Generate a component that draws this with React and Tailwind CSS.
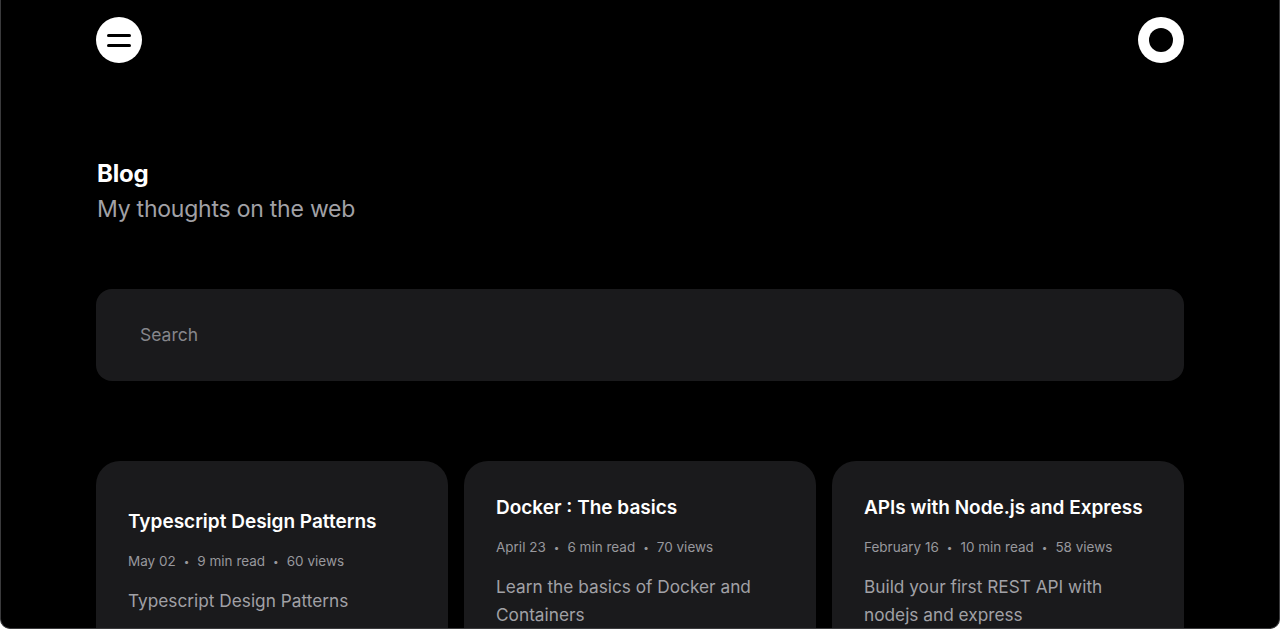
export default function App() {
  const posts = [
    { title: "Typescript Design Patterns", date: "May 02", read: "9 min read", views: "60 views", desc: "Typescript Design Patterns", pt: "pt-[47px]" },
    { title: "Docker : The basics", date: "April 23", read: "6 min read", views: "70 views", desc: "Learn the basics of Docker and Containers", pt: "pt-[33px]" },
    { title: "APIs with Node.js and Express", date: "February 16", read: "10 min read", views: "58 views", desc: "Build your first REST API with nodejs and express", pt: "pt-[33px]" },
  ];
  return (
    <div className="h-[629px] overflow-hidden bg-black border-x border-b border-[#3a3a3c] rounded-b-[10px] font-['Inter',sans-serif] text-white">
      <div className="px-[95px]">
        <header className="flex items-center justify-between pt-[17px]">
          <button className="w-[46px] h-[46px] rounded-full bg-white flex flex-col items-center justify-center gap-[7px]">
            <span className="block w-6 h-[3px] bg-black rounded-full"></span>
            <span className="block w-6 h-[3px] bg-black rounded-full"></span>
          </button>
          <button className="w-[46px] h-[46px] rounded-full bg-white flex items-center justify-center">
            <span className="block w-6 h-6 rounded-full bg-black"></span>
          </button>
        </header>
        <section className="mt-[96px] pl-px">
          <h1 className="text-[24px] leading-[30px] font-bold tracking-[-0.01em]">Blog</h1>
          <p className="text-[23px] leading-[30px] text-[#a1a1a6] mt-[5px] tracking-[-0.01em]">My thoughts on the web</p>
        </section>
        <div className="mt-[65px] h-[92px] rounded-2xl bg-[#1a1a1c] flex items-center pl-[44px]">
          <span className="text-[17.5px] text-[#86868b]">Search</span>
        </div>
        <div className="mt-[80px] grid grid-cols-3 gap-4">
          {posts.map((p) => (
            <div key={p.title} className={`h-[300px] rounded-[24px] bg-[#1a1a1c] px-8 ${p.pt}`}>
              <h2 className="text-[19px] leading-[28px] font-semibold text-white">{p.title}</h2>
              <div className="mt-[15px] flex items-center text-[13.5px] leading-5 text-[#98989d]">
                <span>{p.date}</span>
                <span className="mx-[8px] text-[10px]">•</span>
                <span>{p.read}</span>
                <span className="mx-[8px] text-[10px]">•</span>
                <span>{p.views}</span>
              </div>
              <p className="mt-[16px] text-[17.25px] leading-[28px] text-[#a1a1a6]">{p.desc}</p>
            </div>
          ))}
        </div>
      </div>
    </div>
  );
}
